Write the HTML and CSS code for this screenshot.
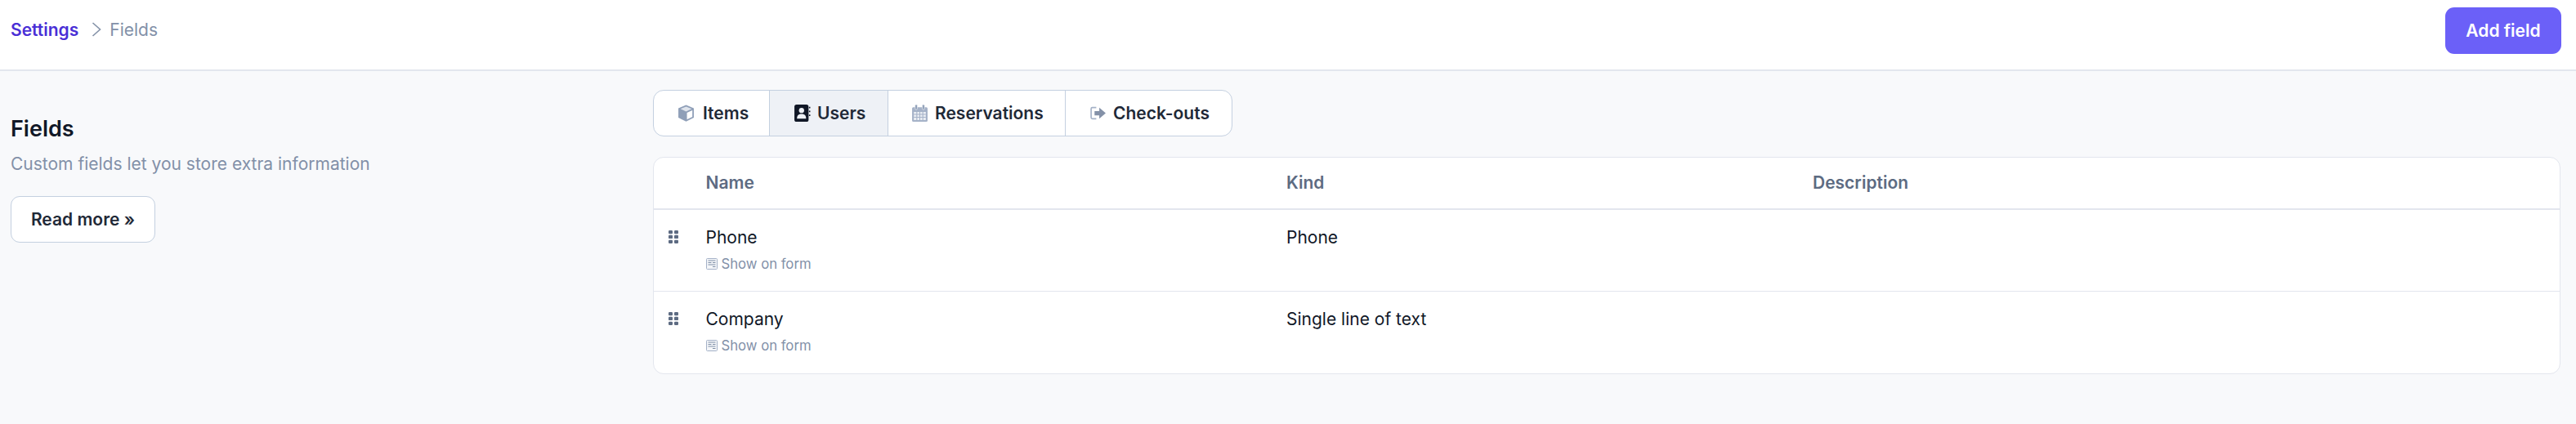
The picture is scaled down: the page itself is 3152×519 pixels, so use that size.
FILE: index.html
```html
<!DOCTYPE html>
<html lang="en">
<head>
<meta charset="utf-8">
<title>Fields</title>
<link rel="stylesheet" href="styles.css">
</head>
<body>
<header class="topbar">
  <nav class="crumbs">
    <a class="crumb-link">Settings</a>
    <svg class="crumb-sep" viewBox="0 0 12 20"><path d="M1.500 2l9 8-9 8" fill="none" stroke="currentColor" stroke-width="1.600"/></svg>
    <span class="crumb-current">Fields</span>
  </nav>
  <button class="btn-primary">Add field</button>
</header>
<main class="layout">
  <aside class="intro">
    <h1 class="intro-title">Fields</h1>
    <p class="intro-text">Custom fields let you store extra information</p>
    <button class="btn-outline">Read more »</button>
  </aside>
  <section class="content">
    <div class="tabs">
      <a class="tab tab-items">
        <svg class="tab-icon" viewBox="0 0 20 20"><path d="M10 .5l9 3.800v11L10 19.800l-9-4.500v-11z" fill="#8f9fb8"/><path d="M10 2.300l6.500 2.700-6.500 3-6.500-3z" fill="#dfe4ec"/><path d="M11 9.600l6.300-2.900v7.500L11 17.400z" fill="#fff"/></svg>
        Items
      </a>
      <a class="tab tab-users tab-active">
        <svg class="tab-icon" viewBox="0 0 20 20"><rect x="1" y="0" width="16.500" height="20" rx="2.500" fill="#111827"/><path d="M18 3.500h1.500M18 8h1.500M18 12.500h1.500" stroke="#111827" stroke-width="1.600"/><circle cx="9.300" cy="6.800" r="3" fill="#eef1f6"/><path d="M4 16.500c0-4 2-5.500 5.300-5.500s5.300 1.500 5.300 5.500z" fill="#eef1f6"/></svg>
        Users
      </a>
      <a class="tab tab-reservations">
        <svg class="tab-icon" viewBox="0 0 20 20"><rect x="1" y="3" width="18" height="17" rx="1.500" fill="#a5b2c8"/><path d="M3 8.500h14v9.500H3z" fill="#e9edf3"/><path d="M3 11.500h14M3 14.800h14M6.500 8.500V18M10 8.500V18M13.500 8.500V18" stroke="#a5b2c8" stroke-width="1"/><rect x="4.500" y="0" width="2.600" height="6" rx="1.300" fill="#8f9fb8" stroke="#fff" stroke-width=".5"/><rect x="12.900" y="0" width="2.600" height="6" rx="1.300" fill="#8f9fb8" stroke="#fff" stroke-width=".5"/></svg>
        Reservations
      </a>
      <a class="tab tab-checkouts">
        <svg class="tab-icon" viewBox="0 0 20 20"><path d="M8 3.500H3.500A1.500 1.500 0 0 0 2 5v10a1.500 1.500 0 0 0 1.500 1.500H8" fill="none" stroke="#a5b2c8" stroke-width="1.600"/><path d="M6 7.500h5.500V3.500L19 10l-7.500 6.500v-4H6z" fill="#8491a8"/></svg>
        Check-outs
      </a>
    </div>
    <div class="table">
      <div class="row row-head">
        <div class="cell-name">Name</div>
        <div class="cell-kind">Kind</div>
        <div class="cell-desc">Description</div>
      </div>
      <div class="row row-body">
        <svg class="grip" viewBox="0 0 12 16"><g fill="#5d6b82"><rect width="5" height="4.300" rx="1.200"/><rect x="7" width="5" height="4.300" rx="1.200"/><rect y="5.800" width="5" height="4.300" rx="1.200"/><rect x="7" y="5.800" width="5" height="4.300" rx="1.200"/><rect y="11.700" width="5" height="4.300" rx="1.200"/><rect x="7" y="11.700" width="5" height="4.300" rx="1.200"/></g></svg>
        <div class="cell-name">
          <div class="field-name">Phone</div>
          <div class="field-meta">
            <svg class="meta-icon" viewBox="0 0 14 14"><rect x=".5" y=".5" width="13" height="13" rx="1" fill="#f4f6f9" stroke="#a5b2c8"/><path d="M2.500 3h9M2.500 5.500h4M8 5.500h3.500M2.500 8h9M8 10.500h3.500" stroke="#7f8ea6" stroke-width="1"/></svg>
            Show on form
          </div>
        </div>
        <div class="cell-kind">Phone</div>
        <div class="cell-desc"></div>
      </div>
      <div class="row row-body">
        <svg class="grip" viewBox="0 0 12 16"><g fill="#5d6b82"><rect width="5" height="4.300" rx="1.200"/><rect x="7" width="5" height="4.300" rx="1.200"/><rect y="5.800" width="5" height="4.300" rx="1.200"/><rect x="7" y="5.800" width="5" height="4.300" rx="1.200"/><rect y="11.700" width="5" height="4.300" rx="1.200"/><rect x="7" y="11.700" width="5" height="4.300" rx="1.200"/></g></svg>
        <div class="cell-name">
          <div class="field-name">Company</div>
          <div class="field-meta">
            <svg class="meta-icon" viewBox="0 0 14 14"><rect x=".5" y=".5" width="13" height="13" rx="1" fill="#f4f6f9" stroke="#a5b2c8"/><path d="M2.500 3h9M2.500 5.500h4M8 5.500h3.500M2.500 8h9M8 10.500h3.500" stroke="#7f8ea6" stroke-width="1"/></svg>
            Show on form
          </div>
        </div>
        <div class="cell-kind">Single line of text</div>
        <div class="cell-desc"></div>
      </div>
    </div>
  </section>
</main>
</body>
</html>
```

FILE: styles.css
```css
* { box-sizing: border-box; }
html, body { margin: 0; height: 100%; }
body {
  font-family: "Inter", "Liberation Sans", sans-serif;
  background: #f8f9fb;
  color: #111827;
  font-size: 21px;
}
.topbar {
  height: 87px;
  background: #fff;
  border-bottom: 2px solid #e3e6ee;
  display: flex;
  align-items: flex-start;
  justify-content: space-between;
  padding: 9px 18px 0 13px;
}
.crumbs { display: flex; align-items: center; height: 54px; font-size: 21px; }
.crumb-link { color: #4a2fd6; font-weight: 600; }
.crumb-sep { width: 12px; height: 20px; margin: 0 10px 0 16px; color: #8492a8; }
.crumb-current { color: #8290a8; }
.btn-primary {
  width: 142px;
  height: 57px;
  border: 0;
  border-radius: 11px;
  background: #6b60f8;
  color: #fff;
  font: 600 21px "Inter", sans-serif;
}
.layout { display: flex; padding: 23px 19px 0 13px; }
.intro { width: 786px; flex: none; padding-top: 32px; }
.intro-title { margin: 0; font-size: 27px; line-height: 32px; font-weight: 600; }
.intro-text { margin: 13px 0 0; color: #8290a8; font-size: 21px; line-height: 28px; }
.btn-outline {
  display: block;
  margin-top: 25px;
  width: 177px;
  height: 57px;
  background: #fff;
  border: 1.500px solid #c4d0e0;
  border-radius: 11px;
  color: #1f2937;
  font: 600 21px "Inter", sans-serif;
}
.content { flex: 1; min-width: 0; }
.tabs {
  display: inline-flex;
  height: 57px;
  background: #fff;
  border: 1.500px solid #c4d0e0;
  border-radius: 13px;
  overflow: hidden;
  vertical-align: top;
}
.tab {
  display: flex;
  align-items: center;
  gap: 10px;
  color: #1f2937;
  font-weight: 600;
  font-size: 21px;
  padding-bottom: 1px;
  border-left: 1.500px solid #c4d0e0;
}
.tab:first-child { border-left: 0; }
.tab-items { width: 141px; padding-left: 29px; }
.tab-users { width: 145px; padding-left: 29px; gap: 8px; }
.tab-reservations { width: 217px; padding-left: 28px; gap: 8px; }
.tab-checkouts { width: 204px; padding-left: 29px; gap: 8px; }
.tab-active { background: #eef1f6; }
.tab-icon { width: 21px; height: 21px; flex: none; }
.table {
  margin-top: 25px;
  height: 266px;
  background: #fff;
  border: 1.500px solid #e3e6ee;
  border-radius: 13px;
}
.row {
  display: grid;
  grid-template-columns: 710.500px 644px 1fr;
  padding-left: 63.500px;
  position: relative;
}
.row-head {
  height: 63.500px;
  align-items: center;
  color: #5d6b82;
  font-weight: 600;
  border-bottom: 2px solid #e3e6ee;
}
.row-body {
  height: 100px;
  padding-top: 20.500px;
  line-height: 28px;
  border-bottom: 1.500px solid #e3e6ee;
}
.row-body:last-child { border-bottom: 0; }
.grip { position: absolute; left: 18px; top: 25px; width: 12px; height: 16px; }
.field-name { line-height: 28px; }
.field-meta {
  display: flex;
  align-items: center;
  gap: 5px;
  margin-top: 6px;
  color: #8290a8;
  font-size: 16.700px;
  line-height: 24px;
}
.meta-icon { width: 14px; height: 14px; flex: none; }
```
